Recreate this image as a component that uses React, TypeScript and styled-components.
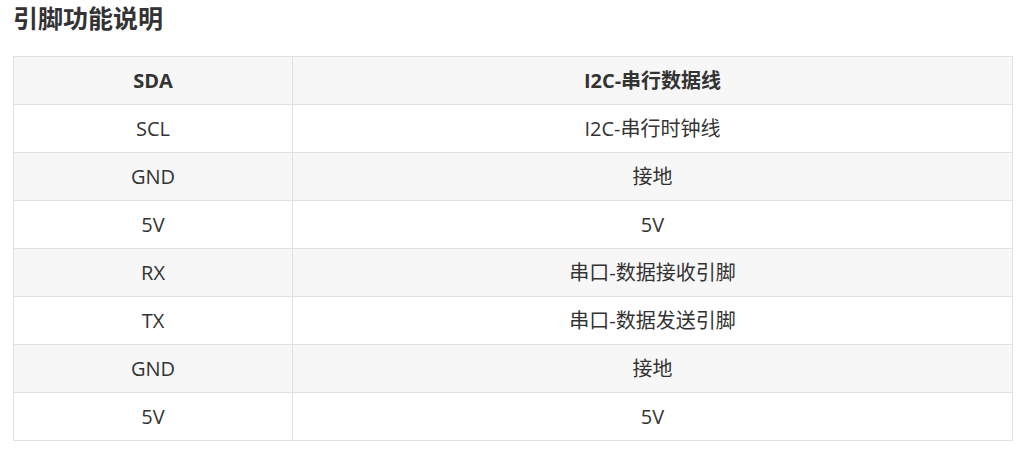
import * as React from "react";
import styled, { createGlobalStyle } from "styled-components";

const GlobalStyle = createGlobalStyle`
  body {
    margin: 0;
    background: #fff;
    font-family: "Open Sans", "Noto Sans CJK SC", sans-serif;
    color: #333;
  }
`;

const Page = styled.div`
  padding: 0 6px 0 13px;
`;

const Title = styled.h3`
  margin: 0 0 21px;
  font-size: 25px;
  line-height: 35px;
  font-weight: 700;
  color: #333;
  font-family: "Noto Sans CJK SC", sans-serif;
`;

const Table = styled.table`
  width: 1000px;
  border-collapse: collapse;
  font-size: 20px;
`;

const Row = styled.tr<{ $shaded: boolean }>`
  background: ${(p) => (p.$shaded ? "#f7f7f7" : "#fff")};
`;

const Cell = styled.td<{ $head?: boolean }>`
  border: 1px solid #dfe2e5;
  height: 47px;
  padding: 0 13px;
  text-align: center;
  line-height: 28px;
  font-weight: ${(p) => (p.$head ? 700 : 400)};
  &:first-child {
    width: 252px;
  }
`;

const rows: [string, string][] = [
  ["SDA", "I2C-串行数据线"],
  ["SCL", "I2C-串行时钟线"],
  ["GND", "接地"],
  ["5V", "5V"],
  ["RX", "串口-数据接收引脚"],
  ["TX", "串口-数据发送引脚"],
  ["GND", "接地"],
  ["5V", "5V"],
];

const App = () => (
  <Page>
    <GlobalStyle />
    <Title>引脚功能说明</Title>
    <Table>
      <tbody>
        {rows.map(([pin, desc], i) => (
          <Row key={i} $shaded={i % 2 === 0}>
            <Cell $head={i === 0}>{pin}</Cell>
            <Cell $head={i === 0}>{desc}</Cell>
          </Row>
        ))}
      </tbody>
    </Table>
  </Page>
);

export default App;
